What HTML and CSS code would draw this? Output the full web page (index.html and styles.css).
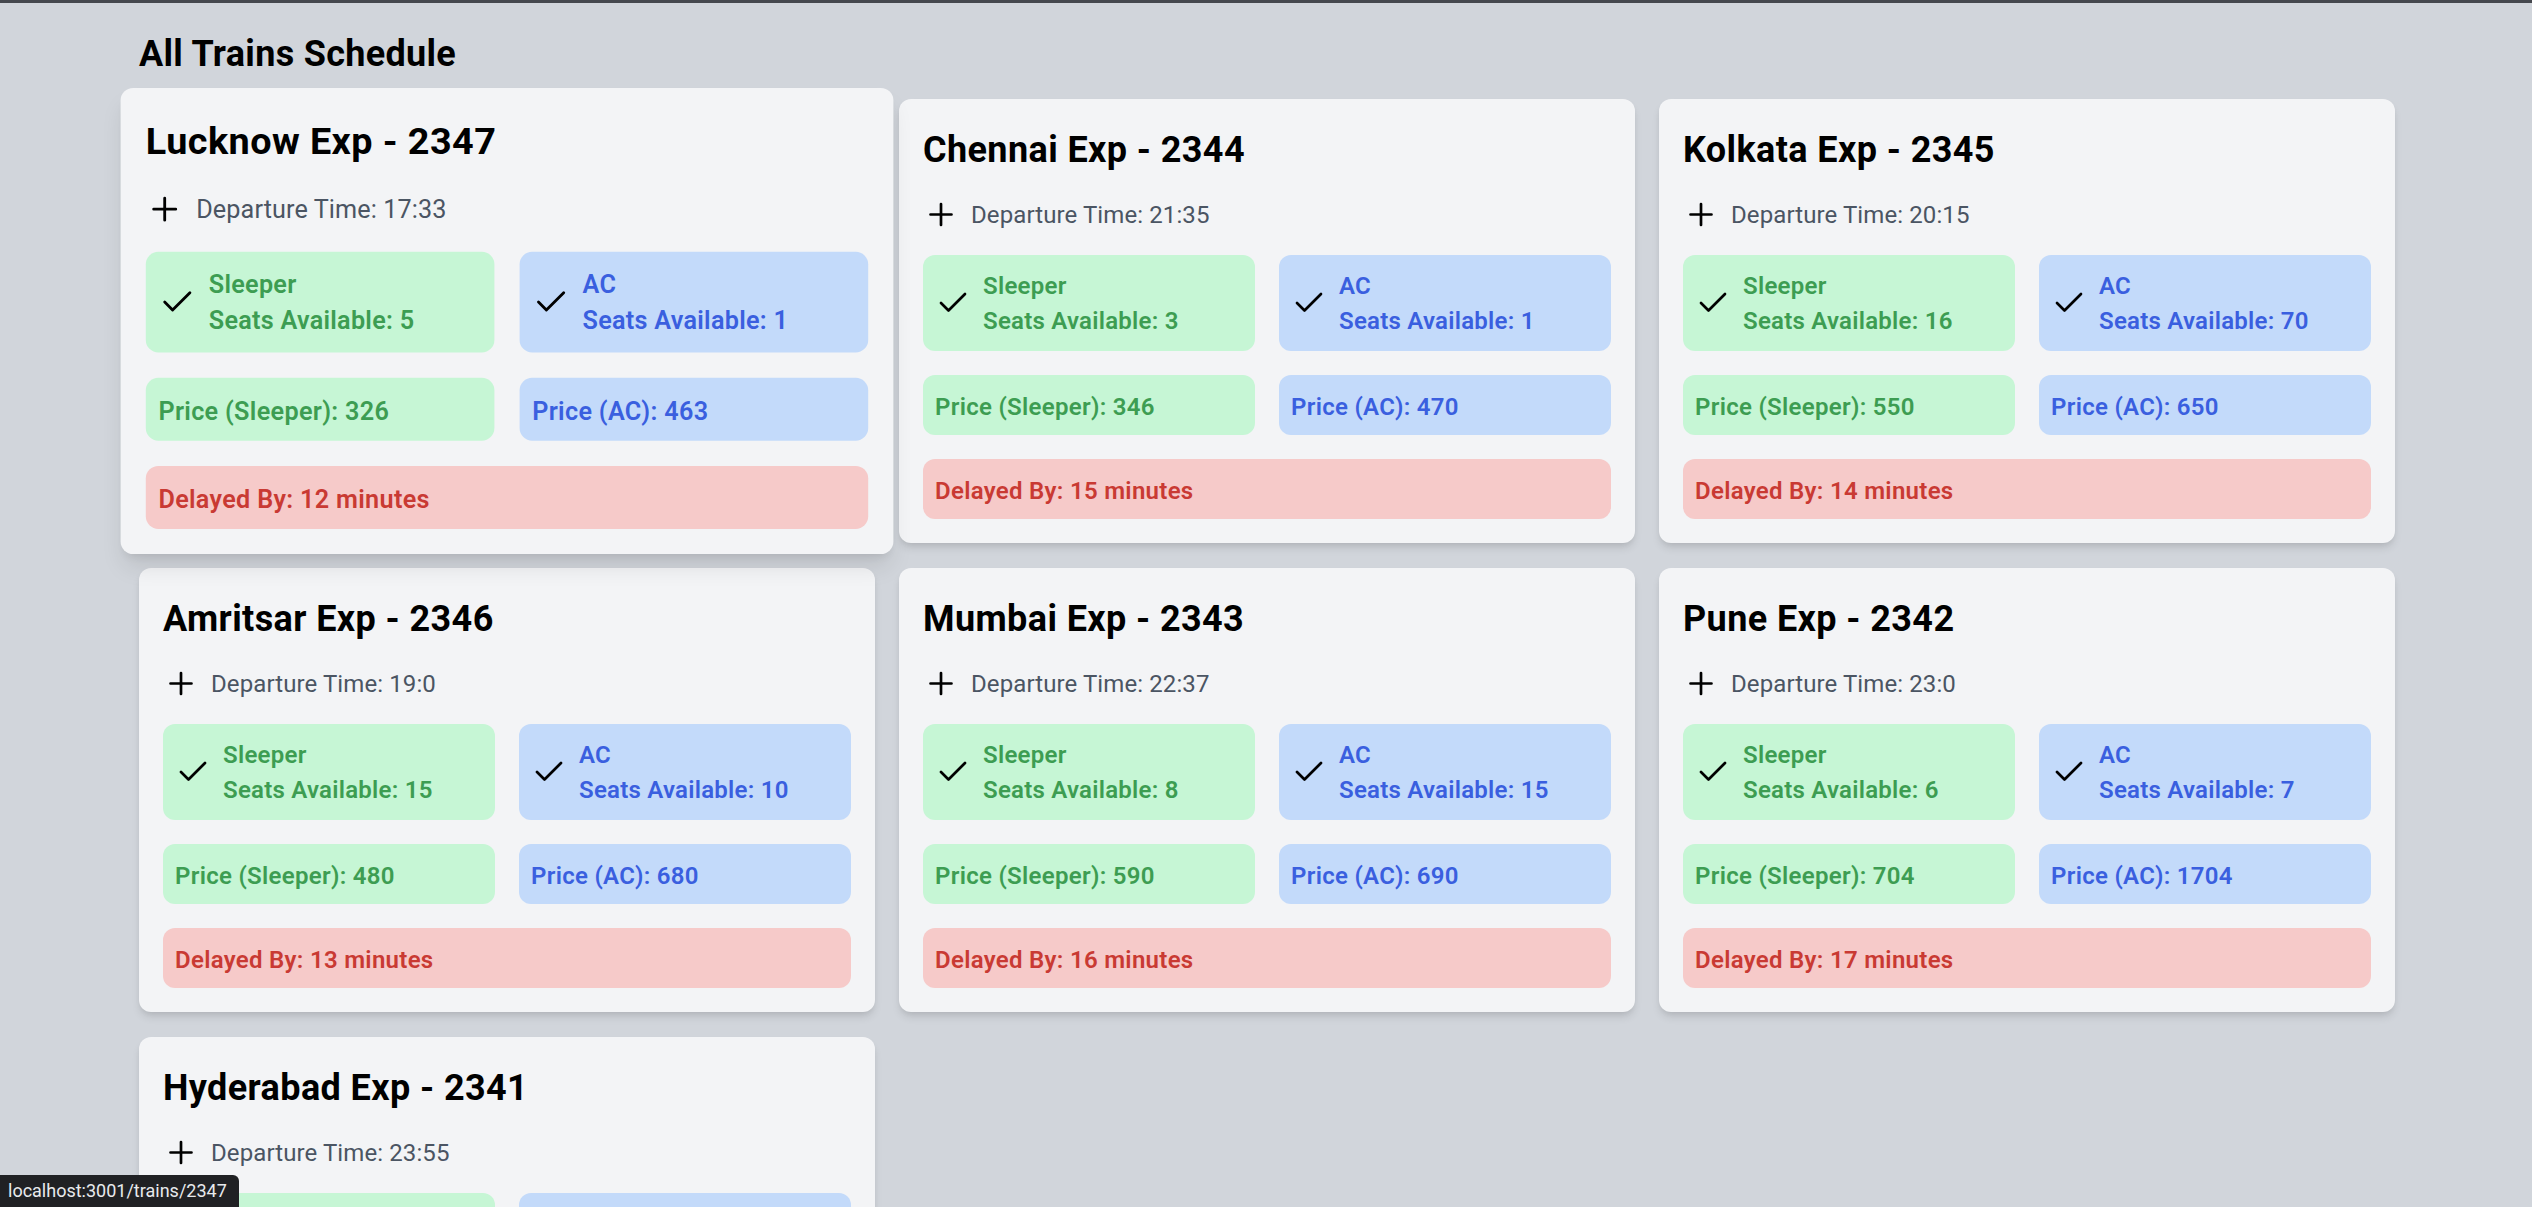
FILE: index.html
```html
<!DOCTYPE html>
<html lang="en">
<head>
<meta charset="utf-8">
<title>All Trains Schedule</title>
<link rel="stylesheet" href="styles.css">
</head>
<body>
<div class="topline"></div>
<main class="container">
  <h1 class="page-title">All Trains Schedule</h1>
  <div class="grid">

    <a class="card card-hover" href="#">
      <h2 class="card-title">Lucknow Exp - 2347</h2>
      <div class="departure">
        <svg class="icon" viewBox="0 -1 24 24"><path d="M5 12h14M12 5v14"/></svg>
        <span class="departure-text">Departure Time: 17:33</span>
      </div>
      <div class="pair">
        <div class="seat green">
          <svg class="icon" viewBox="0 0 24 24"><path d="M20 6 9 17l-5-5"/></svg>
          <div class="seat-text"><div>Sleeper</div><div>Seats Available: 5</div></div>
        </div>
        <div class="seat blue">
          <svg class="icon" viewBox="0 0 24 24"><path d="M20 6 9 17l-5-5"/></svg>
          <div class="seat-text"><div>AC</div><div>Seats Available: 1</div></div>
        </div>
      </div>
      <div class="pair">
        <div class="box green">Price (Sleeper): 326</div>
        <div class="box blue">Price (AC): 463</div>
      </div>
      <div class="box red">Delayed By: 12 minutes</div>
    </a>

    <a class="card" href="#">
      <h2 class="card-title">Chennai Exp - 2344</h2>
      <div class="departure">
        <svg class="icon" viewBox="0 -1 24 24"><path d="M5 12h14M12 5v14"/></svg>
        <span class="departure-text">Departure Time: 21:35</span>
      </div>
      <div class="pair">
        <div class="seat green">
          <svg class="icon" viewBox="0 0 24 24"><path d="M20 6 9 17l-5-5"/></svg>
          <div class="seat-text"><div>Sleeper</div><div>Seats Available: 3</div></div>
        </div>
        <div class="seat blue">
          <svg class="icon" viewBox="0 0 24 24"><path d="M20 6 9 17l-5-5"/></svg>
          <div class="seat-text"><div>AC</div><div>Seats Available: 1</div></div>
        </div>
      </div>
      <div class="pair">
        <div class="box green">Price (Sleeper): 346</div>
        <div class="box blue">Price (AC): 470</div>
      </div>
      <div class="box red">Delayed By: 15 minutes</div>
    </a>

    <a class="card" href="#">
      <h2 class="card-title">Kolkata Exp - 2345</h2>
      <div class="departure">
        <svg class="icon" viewBox="0 -1 24 24"><path d="M5 12h14M12 5v14"/></svg>
        <span class="departure-text">Departure Time: 20:15</span>
      </div>
      <div class="pair">
        <div class="seat green">
          <svg class="icon" viewBox="0 0 24 24"><path d="M20 6 9 17l-5-5"/></svg>
          <div class="seat-text"><div>Sleeper</div><div>Seats Available: 16</div></div>
        </div>
        <div class="seat blue">
          <svg class="icon" viewBox="0 0 24 24"><path d="M20 6 9 17l-5-5"/></svg>
          <div class="seat-text"><div>AC</div><div>Seats Available: 70</div></div>
        </div>
      </div>
      <div class="pair">
        <div class="box green">Price (Sleeper): 550</div>
        <div class="box blue">Price (AC): 650</div>
      </div>
      <div class="box red">Delayed By: 14 minutes</div>
    </a>

    <a class="card" href="#">
      <h2 class="card-title">Amritsar Exp - 2346</h2>
      <div class="departure">
        <svg class="icon" viewBox="0 -1 24 24"><path d="M5 12h14M12 5v14"/></svg>
        <span class="departure-text">Departure Time: 19:0</span>
      </div>
      <div class="pair">
        <div class="seat green">
          <svg class="icon" viewBox="0 0 24 24"><path d="M20 6 9 17l-5-5"/></svg>
          <div class="seat-text"><div>Sleeper</div><div>Seats Available: 15</div></div>
        </div>
        <div class="seat blue">
          <svg class="icon" viewBox="0 0 24 24"><path d="M20 6 9 17l-5-5"/></svg>
          <div class="seat-text"><div>AC</div><div>Seats Available: 10</div></div>
        </div>
      </div>
      <div class="pair">
        <div class="box green">Price (Sleeper): 480</div>
        <div class="box blue">Price (AC): 680</div>
      </div>
      <div class="box red">Delayed By: 13 minutes</div>
    </a>

    <a class="card" href="#">
      <h2 class="card-title">Mumbai Exp - 2343</h2>
      <div class="departure">
        <svg class="icon" viewBox="0 -1 24 24"><path d="M5 12h14M12 5v14"/></svg>
        <span class="departure-text">Departure Time: 22:37</span>
      </div>
      <div class="pair">
        <div class="seat green">
          <svg class="icon" viewBox="0 0 24 24"><path d="M20 6 9 17l-5-5"/></svg>
          <div class="seat-text"><div>Sleeper</div><div>Seats Available: 8</div></div>
        </div>
        <div class="seat blue">
          <svg class="icon" viewBox="0 0 24 24"><path d="M20 6 9 17l-5-5"/></svg>
          <div class="seat-text"><div>AC</div><div>Seats Available: 15</div></div>
        </div>
      </div>
      <div class="pair">
        <div class="box green">Price (Sleeper): 590</div>
        <div class="box blue">Price (AC): 690</div>
      </div>
      <div class="box red">Delayed By: 16 minutes</div>
    </a>

    <a class="card" href="#">
      <h2 class="card-title">Pune Exp - 2342</h2>
      <div class="departure">
        <svg class="icon" viewBox="0 -1 24 24"><path d="M5 12h14M12 5v14"/></svg>
        <span class="departure-text">Departure Time: 23:0</span>
      </div>
      <div class="pair">
        <div class="seat green">
          <svg class="icon" viewBox="0 0 24 24"><path d="M20 6 9 17l-5-5"/></svg>
          <div class="seat-text"><div>Sleeper</div><div>Seats Available: 6</div></div>
        </div>
        <div class="seat blue">
          <svg class="icon" viewBox="0 0 24 24"><path d="M20 6 9 17l-5-5"/></svg>
          <div class="seat-text"><div>AC</div><div>Seats Available: 7</div></div>
        </div>
      </div>
      <div class="pair">
        <div class="box green">Price (Sleeper): 704</div>
        <div class="box blue">Price (AC): 1704</div>
      </div>
      <div class="box red">Delayed By: 17 minutes</div>
    </a>

    <a class="card" href="#">
      <h2 class="card-title">Hyderabad Exp - 2341</h2>
      <div class="departure">
        <svg class="icon" viewBox="0 -1 24 24"><path d="M5 12h14M12 5v14"/></svg>
        <span class="departure-text">Departure Time: 23:55</span>
      </div>
      <div class="pair">
        <div class="seat green">
          <svg class="icon" viewBox="0 0 24 24"><path d="M20 6 9 17l-5-5"/></svg>
          <div class="seat-text"><div>Sleeper</div><div>Seats Available: 9</div></div>
        </div>
        <div class="seat blue">
          <svg class="icon" viewBox="0 0 24 24"><path d="M20 6 9 17l-5-5"/></svg>
          <div class="seat-text"><div>AC</div><div>Seats Available: 12</div></div>
        </div>
      </div>
      <div class="pair">
        <div class="box green">Price (Sleeper): 620</div>
        <div class="box blue">Price (AC): 820</div>
      </div>
      <div class="box red">Delayed By: 10 minutes</div>
    </a>

  </div>
</main>
<div class="status">localhost:3001/trains/2347</div>
</body>
</html>
```

FILE: styles.css
```css
html {
  overflow: hidden;
}
body {
  margin: 0;
  background: #d1d5db;
  font-family: Roboto, "Liberation Sans", sans-serif;
  color: #000;
}
.topline {
  height: 3px;
  background: #45484e;
}
.container {
  max-width: 2304px;
  margin: 0 auto;
  padding: 24px 23px 24px 25px;
  box-sizing: border-box;
}
.page-title {
  margin: 0 0 21px;
  padding-top: 3px;
  font-size: 36px;
  line-height: 48px;
  font-weight: 700;
  letter-spacing: 0.3px;
}
.grid {
  display: grid;
  grid-template-columns: repeat(3, 1fr);
  column-gap: 24px;
  row-gap: 25px;
}
.card {
  display: block;
  text-decoration: none;
  color: inherit;
  background: #f3f4f6;
  border-radius: 12px;
  padding: 24px;
  box-shadow: 0 6px 9px -1.5px rgba(0,0,0,0.1), 0 3px 6px -3px rgba(0,0,0,0.1);
}
.card-hover {
  transform: scale(1.05);
  box-shadow: 0 15px 22px -4px rgba(0,0,0,0.1), 0 6px 9px -6px rgba(0,0,0,0.1);
  position: relative;
  z-index: 1;
}
.card-title {
  margin: 0 0 21px;
  padding-top: 3px;
  font-size: 36px;
  line-height: 48px;
  font-weight: 700;
  letter-spacing: 0.4px;
}
.icon {
  width: 36px;
  height: 36px;
  flex: none;
  fill: none;
  stroke: #000;
  stroke-width: 1.8;
  stroke-linecap: round;
  stroke-linejoin: round;
}
.departure {
  display: flex;
  align-items: center;
  gap: 12px;
  margin-bottom: 24px;
}
.departure-text {
  font-size: 24px;
  line-height: 32px;
  padding-top: 4px;
  color: #4b5563;
  letter-spacing: 0.1px;
}
.pair {
  display: grid;
  grid-template-columns: 1fr 1fr;
  gap: 24px;
  margin-bottom: 24px;
}
.seat {
  display: flex;
  align-items: center;
  gap: 12px;
  padding: 12px;
  border-radius: 12px;
}
.seat-text {
  font-size: 24px;
  line-height: 35px;
  padding-top: 2px;
  font-weight: 600;
  letter-spacing: 0.25px;
}
.box {
  font-size: 24px;
  line-height: 36px;
  font-weight: 600;
  letter-spacing: 0.3px;
  padding: 14px 12px 10px;
  border-radius: 12px;
}
.green {
  background: #c6f6d5;
  color: #3d9d52;
}
.blue {
  background: #c3dafa;
  color: #3a5fdf;
}
.red {
  background: #f6cac9;
  color: #c93a33;
}
.status {
  position: fixed;
  left: 0;
  bottom: 0;
  height: 32px;
  line-height: 32px;
  padding: 0 12px 0 8px;
  background: #202124;
  color: #e8eaed;
  font-size: 18px;
  border-top-right-radius: 6px;
  z-index: 10;
}
```
